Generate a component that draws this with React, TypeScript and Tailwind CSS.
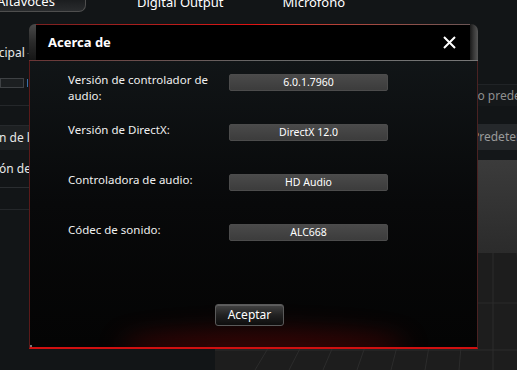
import React from 'react';

const infoRows = [
  { label: 'Versión de controlador de audio:', value: '6.0.1.7960' },
  { label: 'Versión de DirectX:', value: 'DirectX 12.0' },
  { label: 'Controladora de audio:', value: 'HD Audio' },
  { label: 'Códec de sonido:', value: 'ALC668' },
];

const FloorGrid: React.FC = () => (
  <svg width="302" height="117" viewBox="0 0 302 117" className="block">
    <rect width="302" height="117" fill="#1d1d1d" />
    {[0, 1, 2, 3, 4, 5, 6, 7, 8, 9].map((i) => (
      <line
        key={i}
        x1={40 + i * 34}
        y1={117}
        x2={110 + i * 24}
        y2={0}
        stroke="#2c2c2c"
        strokeWidth="1"
      />
    ))}
    <line x1="0" y1="50" x2="302" y2="50" stroke="#2a2a2a" />
    <line x1="0" y1="97" x2="302" y2="97" stroke="#2c2c2c" />
  </svg>
);

const AboutDialog: React.FC = () => (
  <div className="absolute left-[29px] top-[24px] w-[449px] h-[325px] flex flex-col font-['Noto_Sans',sans-serif]">
    {/* title bar */}
    <div className="h-[37px] flex flex-col">
      <div className="flex h-[36px]">
        <div className="w-[7px] rounded-tl-[6px] bg-gradient-to-b from-[#4a4a4a] via-[#2a2a2a] to-[#151515]" />
        <div className="flex-1 flex flex-col">
          <div className="h-[1px] bg-gradient-to-r from-[#7a2020] via-[#e01010] to-[#6a5555]" />
          <div className="flex-1 bg-black flex items-center justify-between pl-[12px] pr-[14px]">
            <span className="text-white text-[13px] font-bold leading-none">Acerca de</span>
            <svg width="13" height="13" viewBox="0 0 13 13">
              <path d="M1 1 L12 12 M12 1 L1 12" stroke="#ffffff" strokeWidth="2" />
            </svg>
          </div>
        </div>
        <div className="w-[8px] rounded-tr-[7px] bg-gradient-to-r from-[#1a1a1a] via-[#3a3a3a] to-[#555555]" />
      </div>
      <div className="h-[1px] bg-gradient-to-r from-[#6a3535] via-[#666666] to-[#777777]" />
    </div>

    {/* body */}
    <div className="relative flex-1 flex flex-col border-l border-r border-b-2 border-l-[#5a1a1a] border-r-[#4a2222] border-b-[#d01010] bg-gradient-to-b from-[#111517] via-[#08090a] to-[#040404] overflow-hidden">
      <div className="absolute left-[90px] right-[70px] bottom-[-14px] h-[30px] rounded-[50%] bg-[#5a0606] blur-[12px] opacity-60" />
      <div className="relative flex flex-col pt-[11px] pl-[38px]">
        {infoRows.map((row, i) => (
          <div key={i} className="h-[50px] flex items-start">
            <div className="w-[161px] pr-[14px] text-[11.5px] leading-[16px] text-[#f0f0f0]">{row.label}</div>
            <div className="mt-[2px] w-[159px] h-[17px] rounded-[2px] border border-[#4c4c4c] bg-gradient-to-b from-[#4a4a4a] to-[#3c3c3c] flex items-center justify-center text-[10.5px] text-white leading-none">
              {row.value}
            </div>
          </div>
        ))}
      </div>
      <button className="relative mt-auto mb-[21px] ml-[185px] self-start w-[69px] h-[22px] rounded-[3px] border border-[#5a5a5a] bg-gradient-to-b from-[#444444] via-[#222222] to-[#0e0e0e] text-white text-[12px] leading-none shadow-[inset_0_1px_0_rgba(255,255,255,0.15)]">
        Aceptar
      </button>
      <div className="absolute left-0 bottom-0 w-[2px] h-[2px] bg-[#777]" />
    </div>
  </div>
);

export default function App() {
  return (
    <div className="relative w-[517px] h-[370px] overflow-hidden bg-[#121517] flex flex-col font-['Noto_Sans',sans-serif]">
      {/* tabs */}
      <div className="h-[14px] flex items-start">
        <div className="w-[86px] h-[13px] -mt-[1px] rounded-br-[7px] border-r border-b border-[#4e4e4e] bg-gradient-to-b from-[#1a1c1e] to-[#2a2c2e] overflow-hidden">
          <div className="-mt-[8px] -ml-[3px] text-[13px] text-white leading-[20px]">Altavoces</div>
        </div>
        <div className="ml-[51px] -mt-[8px] text-[13px] text-white leading-[20px]">Digital Output</div>
        <div className="ml-[59px] -mt-[8px] text-[13px] text-white leading-[20px]">Micrófono</div>
      </div>

      <div className="flex-1 flex">
        {/* left side panel */}
        <div className="w-[215px] flex flex-col text-[12px] text-[#e8e8e8] overflow-hidden">
          <div className="mt-[31px] h-[16px] flex items-center">
            <span className="-ml-[24px] leading-[16px]">Principal</span>
            <div className="flex-1 h-[1px] bg-[#3a3d40] ml-[2px]" />
          </div>
          <div className="mt-[17px] h-[10px] flex items-center">
            <div className="w-[24px] h-[10px] border border-[#3e4144] bg-[#1c1f21]" />
            <div className="ml-[3px] w-[1px] h-[8px] bg-[#3b6ea8]" />
          </div>
          <div className="mt-[17px] h-[1px] bg-[#24272a]" />
          <div className="mt-[19px] h-[25px] bg-[#1d2022] border-t border-[#26292c] flex items-center whitespace-nowrap">
            <span className="-ml-[1px]">n de los altavoces</span>
          </div>
          <div className="h-[37px] flex items-center whitespace-nowrap">
            <span className="-ml-[1px]">ón de sala</span>
          </div>
          <div className="h-[1px] bg-[#2a2d30]" />
          <div className="mt-[21px] h-[1px] bg-[#24272a]" />
        </div>

        {/* right content */}
        <div className="flex-1 flex flex-col overflow-hidden text-[12px] whitespace-nowrap">
          <div className="mt-[70px] h-[22px] bg-[#15181a] border-t border-[#202326] flex items-center text-[#8e8e8e]">
            <span className="ml-[255px]">no predeterminado</span>
          </div>
          <div className="mt-[18px] h-[26px] bg-[#25282b] flex items-center text-[#9a9a9a]">
            <span className="ml-[257px]">Predeterminado</span>
          </div>
          <div className="h-[10px] bg-[#141719]" />
          <div className="h-[93px] bg-gradient-to-b from-[#3b3b3b] to-[#2b2b2b]" />
          <FloorGrid />
        </div>
      </div>

      <AboutDialog />
    </div>
  );
}
